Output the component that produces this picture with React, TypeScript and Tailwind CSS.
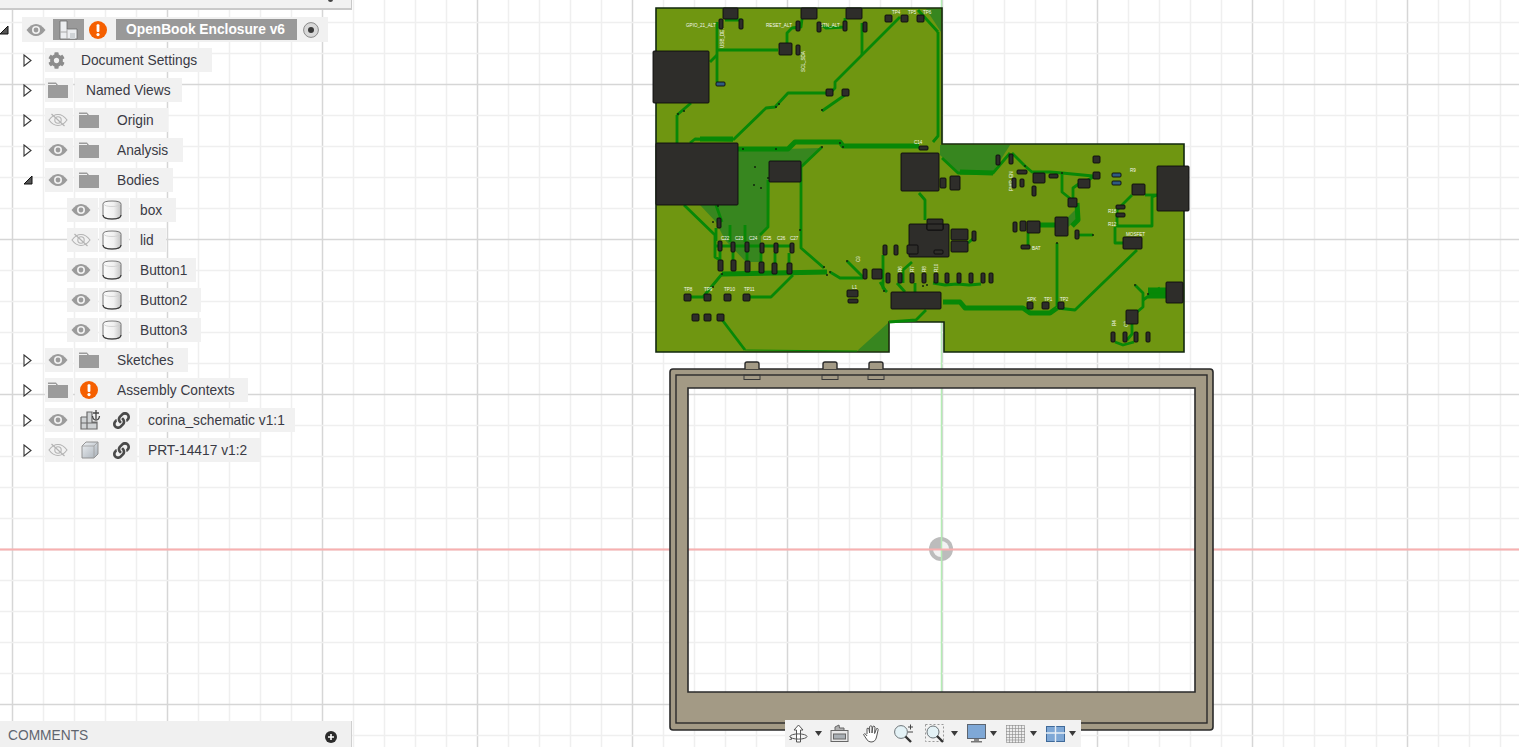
import React from "react";
import { FaCog, FaLink } from "react-icons/fa";

const C = "bg-[#f1f1f1] h-[24px] flex items-center shrink-0";
const T = "bg-[#f1f1f1] h-[24px] flex items-center shrink-0 pt-[2px]";

type R = [number, number, number, number];
const chips: R[] = [
  [723,8,15,11],[801,8,16,11],[846,8,16,11],[719,19,4,10],[739,19,4,10],[796,21,4,10],[817,22,4,10],[843,21,4,10],[863,22,4,10],
  [885,15,7,7],[901,15,7,7],[917,15,7,7],[779,43,13,12],[796,45,4,10],[653,51,56,52],[826,89,7,7],[842,89,7,7],
  [656,143,82,62],[769,161,32,21],[901,153,38,38],[919,146,9,4],[940,178,6,10],[950,176,10,14],
  [717,218,4,10],[718,241,4,10],[731,242,4,10],[745,242,4,10],[760,243,4,10],[774,243,4,10],[790,243,4,10],
  [718,260,5,11],[731,260,5,11],[745,261,5,11],[759,262,5,11],[772,263,5,11],[787,263,5,11],
  [684,294,7,7],[704,294,7,7],[724,294,7,7],[743,294,7,7],[692,314,7,7],[704,314,7,7],[717,314,7,7],
  [863,269,4,10],[872,269,10,10],[847,290,11,7],[848,299,10,4],[883,245,4,10],[894,245,4,10],
  [909,224,40,33],[907,245,11,9],[927,219,16,11],[927,224,16,6],[934,250,9,4],
  [886,273,4,10],[898,273,4,10],[910,273,4,10],[922,273,4,10],[934,273,4,10],[945,273,4,10],[957,273,4,10],[969,273,4,10],[981,273,4,10],[989,273,4,10],
  [891,292,50,17],[996,155,4,10],[1009,154,4,10],[1017,170,10,4],[1033,173,12,10],[1049,174,9,4],[1012,178,4,10],[1020,179,4,8],[1032,186,4,10],
  [1093,156,7,7],[1093,172,7,7],[1078,179,12,9],[1132,184,13,11],[1157,166,32,45],[1068,198,9,9],[1116,205,9,4],[1116,213,9,4],
  [1013,222,4,10],[1020,221,6,10],[1027,221,13,12],[1055,217,13,19],[1075,230,4,9],[1021,245,9,4],[1123,237,19,12],
  [951,229,17,11],[951,241,17,11],[972,231,4,10],[1166,282,17,21],[1027,302,6,7],[1042,302,7,7],[1058,302,6,7],[1126,310,12,14],
  [1111,332,4,10],[1123,332,4,10],[1134,332,4,10],[1146,332,4,10],
];
const blueChips: R[] = [[716,82,9,4],[1112,173,9,4],[1112,181,9,4]];

const thin = [
  "717,22 717,82","718,50 778,50","725,20 741,20 741,25","802,19 801,27 792,28 787,33 787,43","845,18 845,27 826,28 820,24",
  "862,23 862,55","900,17 835,82 835,88 830,93","845,95 822,111","827,93 788,93 775,107 766,108 733,140","733,140 695,139 690,143",
  "677,115 677,143","677,115 691,103","710,62 717,55","822,147 801,167 801,248 824,268","684,205 715,235 715,257 720,260",
  "768,180 768,227 760,235","715,246 793,246","722,274 703,297 687,297","793,275 771,297 747,297","720,317 745,350",
  "830,272 840,278 863,278","847,261 863,277","885,290 880,282","926,310 916,320 889,322","919,193 925,200 925,220",
  "1010,153 993,173 958,173 942,158","1012,153 1025,166 1032,172 1050,172 1062,173 1093,176","1062,173 1062,192 1072,200","1073,198 1073,188 1080,183",
  "1088,180 1095,176","1028,233 1028,245","1057,243 1057,307","1078,235 1093,235","1057,308 1075,310 1137,250",
  "1132,195 1117,210 1117,226 1152,226 1152,197 1157,195","1145,195 1157,195","1115,227 1115,243 1123,243","1135,285 1143,293 1143,307 1137,312",
  "1132,323 1132,334 1127,340","968,243 975,237","933,283 945,285 957,284 969,285 981,284","883,255 883,288 887,292","903,283 903,270 912,262",
  "915,283 915,292","897,283 905,292","938,32 938,136 933,142","918,10 938,32","716,228 716,241","730,225 730,242","745,225 745,242",
  "720,251 720,260","733,252 733,260","747,252 747,261","761,253 761,262","775,253 775,263","789,253 789,263","722,222 716,205",
  "1143,300 1160,288","1115,342 1123,345 1134,342",
];
const thick = [
  "738,149 788,149 795,142 840,142 843,146 919,146","722,274 827,272","1077,203 1078,220 1072,226","1040,225 1055,225",
  "943,302 960,302 965,308 1023,308 1030,313 1050,313 1057,308","1148,293 1166,293","1148,290 1166,290","1148,296 1166,296","960,172 993,173","700,139 733,139",
];
const vias = [[678,114],[684,111],[776,107],[779,104],[822,110],[840,143],[843,147],[822,147],[743,149],[776,149],[755,167],[761,188],[768,178],[754,185],[718,206],[713,222],
  [800,230],[824,267],[830,272],[827,275],[847,261],[713,287],[722,274],[884,291],[923,286],[927,285],[1093,235],[1057,243],[1135,285],[1148,294],[1062,173],[1025,166]];

type L = [string, number, number, number?];
const labels: L[] = [
  ["GPIO_21_ALT",686,27],["RESET_ALT",766,27],["BTN_ALT",820,27],["TP4",892,14],["TP5",908,14],["TP6",923,14],
  ["TP8",684,291],["TP9",704,291],["TP10",724,291],["TP11",744,291],["C14",914,144],["R9",1130,172],["R12",1108,226],
  ["MOSFET",1126,236],["R18",1108,213],["PWR_EN",1013,191,-90],["SCL_SDA",805,72,-90],["USB_DET",724,48,-90],["C9",860,262,-90],
  ["SPK",1027,301],["TP1",1044,301],["TP2",1060,301],["R4",1116,326,-90],["C3",1128,327,-90],["R6",902,272,-90],["R7",914,272,-90],["R8",926,272,-90],["R10",938,272,-90],
  ["C22",721,240],["C23",735,240],["C24",749,240],["C25",763,240],["C26",777,240],["C27",790,240],["BAT",1032,250],["L1",852,289],
];

function Canvas() {
  const v: React.ReactNode[] = [];
  for (let x = 12; x < 1519; x += 31) {
    const major = (x - 12) % 155 === 0;
    v.push(<line key={"v" + x} x1={x + 0.5} x2={x + 0.5} y1={0} y2={747} stroke={major ? "#d6d6d6" : "#efefef"} strokeWidth={1.5} />);
  }
  for (let y = 22; y < 747; y += 31) {
    const major = (y - 84) % 155 === 0;
    v.push(<line key={"h" + y} y1={y + 0.5} y2={y + 0.5} x1={0} x2={1519} stroke={major ? "#d6d6d6" : "#efefef"} strokeWidth={1.5} />);
  }
  return (
    <svg className="absolute inset-0" width={1519} height={747} viewBox="0 0 1519 747">
      {v}
      <circle cx={941} cy={549} r={12} fill="#bcbcbc" />
      <path d="M941 549V541A8 8 0 0 1 949 549Z" fill="#f2f2f2" />
      <path d="M941 549V557A8 8 0 0 1 933 549Z" fill="#f2f2f2" />
      <line x1={941.5} x2={941.5} y1={0} y2={747} stroke="#b4ecb4" strokeWidth={1.5} />
      <line x1={0} x2={1519} y1={549.5} y2={549.5} stroke="#f8b0b0" strokeWidth={2} />
      <path
        fillRule="evenodd"
        d="M673 369H1210Q1213 369 1213 372V727Q1213 730 1210 730H673Q670 730 670 727V372Q670 369 673 369ZM688 388V692H1195V388Z"
        fill="#a39a85"
        stroke="#2a2a2a"
        strokeWidth={1.6}
      />
      <rect x={676} y={375} width={531} height={348} fill="none" stroke="#2a2a2a" strokeWidth={1.4} />
      {[745, 823, 869].map((x) => (
        <g key={x}>
          <path d={`M${x} 369V364Q${x} 362 ${x + 2} 362H${x + 12}Q${x + 14} 362 ${x + 14} 364V369`} fill="#a39a85" stroke="#2a2a2a" strokeWidth={1.4} />
          <rect x={x - 1} y={375} width={16} height={4.5} fill="none" stroke="#3a3a3a" strokeWidth={1} />
        </g>
      ))}
      <path d="M656 8H942V144H1184V352H944V322H889V352H656Z" fill="#6f9611" stroke="#12280e" strokeWidth={1.6} />
      <g fill="#37861f">
        <polygon points="738,150 822,148 801,167 770,165 769,226 761,236 761,262 746,262 725,240 716,222 700,205 738,205" />
        <polygon points="940,145 1010,145 993,172 958,172 940,155" />
        <polygon points="926,9 941,9 941,32" />
        <polygon points="857,351 888,323 888,351" />
        <polygon points="1068,217 1077,208 1079,218 1068,227" />
      </g>
      <polygon points="770,168 800,168 800,226 770,226" fill="#6f9611" />
      <g fill="none" stroke="#078807" strokeLinejoin="round">
        {thin.map((p) => (
          <polyline key={p} points={p} strokeWidth={2.8} />
        ))}
        {thick.map((p) => (
          <polyline key={p} points={p} strokeWidth={5} />
        ))}
      </g>
      <polyline points="745,350 857,351" fill="none" stroke="#078807" strokeWidth={1} />
      {vias.map(([x, y]) => (
        <circle key={x + "-" + y} cx={x} cy={y} r={1} fill="#10240c" />
      ))}
      <g fill="#f4f7ee" fontSize={4.6} fontFamily="'Liberation Sans', sans-serif">
        {labels.map(([t, x, y, r]) => (
          <text key={t + x} x={x} y={y} transform={r ? `rotate(${r} ${x} ${y})` : undefined}>
            {t}
          </text>
        ))}
      </g>
      {chips.map(([x, y, w, h]) => (
        <rect key={`${x}-${y}`} x={x} y={y} width={w} height={h} rx={1} fill="#2e2d2a" stroke="#0c0c0c" strokeWidth={0.9} />
      ))}
      {blueChips.map(([x, y, w, h]) => (
        <rect key={`${x}-${y}`} x={x} y={y} width={w} height={h} rx={1} fill="#2f5a80" stroke="#0c0c0c" strokeWidth={0.9} />
      ))}
    </svg>
  );
}

function Eye({ off = false }: { off?: boolean }) {
  const col = off ? "#b3b3b3" : "#9b9b9b";
  return (
    <svg width={20} height={14} viewBox="0 0 20 14">
      {off ? (
        <>
          <path d="M1 7Q5 1.5 10 1.5T19 7Q15 12.5 10 12.5T1 7Z" fill="none" stroke={col} strokeWidth={1.1} />
          <circle cx={10} cy={7} r={3.2} fill="none" stroke={col} strokeWidth={1.1} />
          <path d="M3.5 1L16.5 13" stroke={col} strokeWidth={1.2} />
        </>
      ) : (
        <>
          <path d="M0.5 7Q5 1 10 1T19.5 7Q15 13 10 13T0.5 7Z" fill={col} />
          <circle cx={10} cy={7} r={4} fill="#f1f1f1" />
          <circle cx={10} cy={7} r={2.4} fill={col} />
        </>
      )}
    </svg>
  );
}

function Folder() {
  return (
    <svg width={20} height={16} viewBox="0 0 20 16">
      <path d="M0 0.5H8V2H0Z M0 3H20V16H0Z" fill="#9b9b9b" />
      <path d="M8 0.5L10 3H8Z" fill="#9b9b9b" />
    </svg>
  );
}

function Warn() {
  return (
    <svg width={18} height={18} viewBox="0 0 18 18">
      <circle cx={9} cy={9} r={9} fill="#f55f00" />
      <rect x={7.6} y={3.2} width={2.8} height={7.8} rx={1} fill="#fff" />
      <circle cx={9} cy={13.6} r={1.6} fill="#fff" />
    </svg>
  );
}

function Cyl() {
  return (
    <svg width={20} height={20} viewBox="0 0 20 20">
      <defs>
        <linearGradient id="cyl" x1="0" x2="1" y1="0" y2="0">
          <stop offset="0" stopColor="#fbfbfb" />
          <stop offset="0.6" stopColor="#f0f0f0" />
          <stop offset="1" stopColor="#c4c4c4" />
        </linearGradient>
      </defs>
      <path d="M1 4Q1 1 10 1T19 4V15Q19 19 10 19T1 15Z" fill="url(#cyl)" stroke="#6a6a6a" strokeWidth={0.9} />
      <path d="M1 15Q1 19 10 19T19 15" fill="none" stroke="#3c3c3c" strokeWidth={1.2} />
      <path d="M1.5 4Q3 6.5 10 6.5T18.5 4" fill="none" stroke="#d0d0d0" strokeWidth={0.9} />
    </svg>
  );
}

function Closed() {
  return (
    <svg width={9} height={13} viewBox="0 0 9 13">
      <path d="M1 1L8 6.5L1 12Z" fill="#fff" stroke="#333" strokeWidth={1.1} />
    </svg>
  );
}

function Open() {
  return (
    <svg width={10} height={10} viewBox="0 0 10 10">
      <path d="M9 1V9H1Z" fill="#555" stroke="#111" strokeWidth={1} />
    </svg>
  );
}

function CompLinked() {
  return (
    <svg width={21} height={22} viewBox="0 0 21 22">
      <path d="M1 8H7V3H12V8M1 8V20H17V13H12V8M1 14H17M7 8V20" fill="#cfd2d4" stroke="#6b6b6b" strokeWidth={1.2} />
      <path d="M16 1V10M13 4H19M12.5 7Q13 11 16 11T19.5 7" fill="none" stroke="#444" strokeWidth={1.3} />
    </svg>
  );
}

function Cube() {
  return (
    <svg width={18} height={18} viewBox="0 0 18 18">
      <defs>
        <linearGradient id="cube" x1="0" x2="1" y1="0" y2="1">
          <stop offset="0" stopColor="#eef1f4" />
          <stop offset="1" stopColor="#a8b0b8" />
        </linearGradient>
      </defs>
      <path d="M1 5L5 1H17V13L13 17H1Z" fill="url(#cube)" stroke="#8b8b8b" strokeWidth={0.9} />
      <path d="M1 5H13V17M13 5L17 1" fill="none" stroke="#9c9c9c" strokeWidth={0.8} />
    </svg>
  );
}

function RootComp() {
  return (
    <svg width={19} height={20} viewBox="0 0 19 20">
      <path d="M1 1H8V9H18V19H1Z" fill="#eceef0" stroke="#6a6a6a" strokeWidth={0.8} />
      <path d="M8 9V19M1 12H8" stroke="#a8a8a8" fill="none" />
      <path d="M11 13H16V19H11Z" fill="#cfd3d6" />
    </svg>
  );
}

function Radio() {
  return (
    <svg width={16} height={16} viewBox="0 0 16 16">
      <circle cx={8} cy={8} r={7.4} fill="#d8d8d8" stroke="#8a8a8a" />
      <circle cx={8} cy={8} r={3} fill="#3a3a3a" />
    </svg>
  );
}

function Spacer({ open, closed }: { open?: boolean; closed?: boolean }) {
  return (
    <div className="w-[43px] shrink-0 flex items-center pl-[23px]">
      {closed && <Closed />}
      {open && <Open />}
    </div>
  );
}

const Row = ({ children }: { children: React.ReactNode }) => (
  <div className="flex items-center h-[30px] gap-[2px] text-[13.75px] text-[#3a3a44]">{children}</div>
);

function EyeCell({ off }: { off?: boolean }) {
  return (
    <div className={`${C} w-[28px] justify-center pr-[2px] -mr-[2px]`}>
      <Eye off={off} />
    </div>
  );
}

function BodyRow({ name, off, w }: { name: string; off?: boolean; w: string }) {
  return (
    <div className="flex items-center h-[30px] gap-[1px] text-[13.75px] text-[#3a3a44] pl-[67px]">
      <div className={`${C} w-[31px] justify-center pr-[3px]`}>
        <Eye off={off} />
      </div>
      <div className={`${C} w-[30px] justify-center pr-[4px]`}>
        <Cyl />
      </div>
      <div className={`${T} pl-[10px] ${w}`}>{name}</div>
    </div>
  );
}

function FolderRow({ name, off, open, w }: { name: string; off?: boolean; open?: boolean; w: string }) {
  return (
    <Row>
      <Spacer open={open} closed={!open} />
      <EyeCell off={off} />
      <div className={`${C} w-[30px] justify-center pr-[2px] ml-[2px]`}>
        <Folder />
      </div>
      <div className={`${T} pl-[12px] -ml-[2px] ${w}`}>{name}</div>
    </Row>
  );
}

function Tree() {
  return (
    <div className="pt-[5px]">
      <div className="flex items-start h-[30px] pt-[2px] text-[13.75px]">
        <div className="w-[22px] h-[25px] flex items-center shrink-0">
          <svg width={9} height={10} viewBox="0 0 9 10">
            <path d="M8 1V9H0Z" fill="#555" stroke="#111" strokeWidth={1} />
          </svg>
        </div>
        <div className="flex items-center h-[25px] w-[306px] bg-[#f1f1f1]">
          <div className="w-[28px] flex justify-center">
            <Eye />
          </div>
          <div className="w-[31px] ml-[3px] h-[21px] bg-[#9a9a9a] flex items-center justify-center">
            <RootComp />
          </div>
          <div className="w-[28px] mr-[4px] flex justify-center">
            <Warn />
          </div>
          <div className="w-[181px] h-[21px] bg-[#999999] text-white font-bold flex items-center justify-center pt-[2px] pr-[2px]">
            OpenBook Enclosure v6
          </div>
          <div className="w-[28px] flex justify-center">
            <Radio />
          </div>
        </div>
      </div>
      <Row>
        <Spacer closed />
        <div className={`${C} w-[28px] justify-center pr-[6px] -mr-[2px]`}>
          <FaCog size={17} color="#8c8c8c" />
        </div>
        <div className={`${T} w-[139px] pl-[8px]`}>Document Settings</div>
      </Row>
      <Row>
        <Spacer closed />
        <div className={`${C} w-[28px] justify-center pr-[2px]`}>
          <Folder />
        </div>
        <div className={`${T} w-[107px] pl-[11px]`}>Named Views</div>
      </Row>
      <FolderRow name="Origin" off w="w-[63px]" />
      <FolderRow name="Analysis" w="w-[78px]" />
      <FolderRow name="Bodies" open w="w-[68px]" />
      <BodyRow name="box" w="w-[46px]" />
      <BodyRow name="lid" off w="w-[36px]" />
      <BodyRow name="Button1" w="w-[66px]" />
      <BodyRow name="Button2" w="w-[71px]" />
      <BodyRow name="Button3" w="w-[71px]" />
      <FolderRow name="Sketches" w="w-[83px]" />
      <Row>
        <Spacer closed />
        <div className={`${C} w-[28px] justify-center pr-[2px]`}>
          <Folder />
        </div>
        <div className={`${C} w-[30px] justify-center pr-[2px]`}>
          <Warn />
        </div>
        <div className={`${T} w-[143px] pl-[12px] -ml-[2px]`}>Assembly Contexts</div>
      </Row>
      <Row>
        <Spacer closed />
        <EyeCell />
        <div className={`${C} w-[30px] justify-center ml-[2px]`}>
          <CompLinked />
        </div>
        <div className={`${C} w-[32px] justify-center -ml-[2px]`}>
          <FaLink size={17} color="#4a4a4a" />
        </div>
        <div className={`${T} w-[156px] pl-[9px]`}>corina_schematic v1:1</div>
      </Row>
      <Row>
        <Spacer closed />
        <EyeCell off />
        <div className={`${C} w-[30px] justify-center ml-[2px]`}>
          <Cube />
        </div>
        <div className={`${C} w-[32px] justify-center -ml-[2px]`}>
          <FaLink size={17} color="#4a4a4a" />
        </div>
        <div className={`${T} w-[121px] pl-[9px]`}>PRT-14417 v1:2</div>
      </Row>
    </div>
  );
}

function Caret({ className }: { className: string }) {
  return (
    <svg className={className} width={7} height={5} viewBox="0 0 7 5">
      <path d="M0 0H7L3.5 5Z" fill="#3a3a3a" />
    </svg>
  );
}

function Toolbar() {
  return (
    <div className="absolute left-[785px] bottom-0 w-[296px] h-[27px] bg-[#f2f2f2] flex items-center pl-[4px]">
      <svg width={19} height={20} viewBox="0 0 19 20" fill="none" stroke="#555" strokeWidth={1}>
        <path d="M9.5 1L14 6H11.5V18H7.5V6H5Z" fill="#fff" />
        <ellipse cx={9.5} cy={12.5} rx={8.5} ry={2.6} />
        <path d="M1 12.5L3 15L0.5 15.5" />
      </svg>
      <Caret className="ml-[7px]" />
      <svg className="ml-[8px]" width={19} height={19} viewBox="0 0 19 19" fill="none" stroke="#666">
        <rect x={1} y={6.5} width={17} height={11} fill="#e8e8e8" />
        <rect x={3.5} y={10} width={12} height={5} fill="#a9afb4" />
        <path d="M5 6V3L9 1L9.5 4H14V6" fill="#b0b0b0" />
      </svg>
      <svg className="ml-[13px]" width={20} height={19} viewBox="0 0 20 19" fill="none" stroke="#555" strokeLinejoin="round">
        <path d="M5 10V4.5Q6.3 3.5 7 5L7.6 9L7.6 2.5Q9 1 10 2.5V9L10.8 2.5Q12 1.3 13 3L12.6 9.5L14.6 4.5Q16 4 16.2 5.5L14.5 13Q13.5 18 9 18Q6 18 4.5 15L1.5 10.5Q2.5 9 4 10.5L5 12" fill="#fff" />
      </svg>
      <svg className="ml-[11px]" width={21} height={19} viewBox="0 0 21 19" fill="none">
        <circle cx={8} cy={8} r={6.4} fill="#e4f2f6" stroke="#6c7478" />
        <path d="M12.5 12.5L18 18" stroke="#333" strokeWidth={2.4} />
        <path d="M15 3H20M17.5 0.5V5.5" stroke="#444" />
        <path d="M15 8H20" stroke="#444" />
      </svg>
      <svg className="ml-[11px]" width={20} height={19} viewBox="0 0 20 19" fill="none">
        <rect x={0.5} y={0.5} width={18} height={17} stroke="#999" strokeDasharray="2 2" />
        <circle cx={8} cy={8} r={6} fill="#e4f2f6" stroke="#6c7478" />
        <path d="M12 12L18 18" stroke="#333" strokeWidth={2.4} />
      </svg>
      <Caret className="ml-[6px]" />
      <svg className="ml-[9px]" width={19} height={19} viewBox="0 0 19 19">
        <rect x={0.5} y={0.5} width={18} height={14} fill="#7fa8d6" stroke="#5d6570" />
        <rect x={7} y={15} width={5} height={2} fill="#8a8a8a" />
        <rect x={4} y={17} width={11} height={1.5} fill="#777" />
      </svg>
      <Caret className="ml-[4px]" />
      <svg className="ml-[9px]" width={19} height={18} viewBox="0 0 19 18" stroke="#8a8a8a" strokeWidth={0.6} fill="#ededed">
        <rect x={0.5} y={0.5} width={18} height={17} />
        <path d="M3.5 0V18M6.5 0V18M9.5 0V18M12.5 0V18M15.5 0V18M0 3.5H19M0 6.5H19M0 9.5H19M0 12.5H19M0 15H19" fill="none" />
      </svg>
      <Caret className="ml-[5px]" />
      <svg className="ml-[9px]" width={19} height={16} viewBox="0 0 19 16">
        <rect x={0.5} y={0.5} width={18} height={15} fill="#7fa8d6" stroke="#3f6a9a" />
        <path d="M9.5 0V16M0 7H19" stroke="#e8eef5" strokeWidth={1.4} />
      </svg>
      <Caret className="ml-[4px]" />
    </div>
  );
}

export default function App() {
  return (
    <div className="relative w-[1519px] h-[747px] overflow-hidden bg-white font-['Liberation_Sans',Arial,sans-serif]">
      <Canvas />
      <div className="absolute inset-y-0 left-0 w-[352px] flex flex-col">
        <div className="h-[10px] shrink-0 bg-[#f1f1f1] border-b-2 border-r border-[#c9c9c9] relative">
          <div className="absolute right-[18px] -top-[3px] w-[5px] h-[5px] rounded-full bg-[#444]" />
        </div>
        <Tree />
        <div className="mt-auto h-[26px] bg-[#f0f0f0] border-r border-[#cfcfcf] flex items-center justify-between pl-[8px] pr-[14px] pt-[5px] text-[13.75px] text-[#60656f]">
          <span>COMMENTS</span>
          <svg width={12} height={12} viewBox="0 0 12 12">
            <circle cx={6} cy={6} r={6} fill="#2b2b2b" />
            <path d="M6 3V9M3 6H9" stroke="#fff" strokeWidth={1.6} />
          </svg>
        </div>
      </div>
      <Toolbar />
    </div>
  );
}
